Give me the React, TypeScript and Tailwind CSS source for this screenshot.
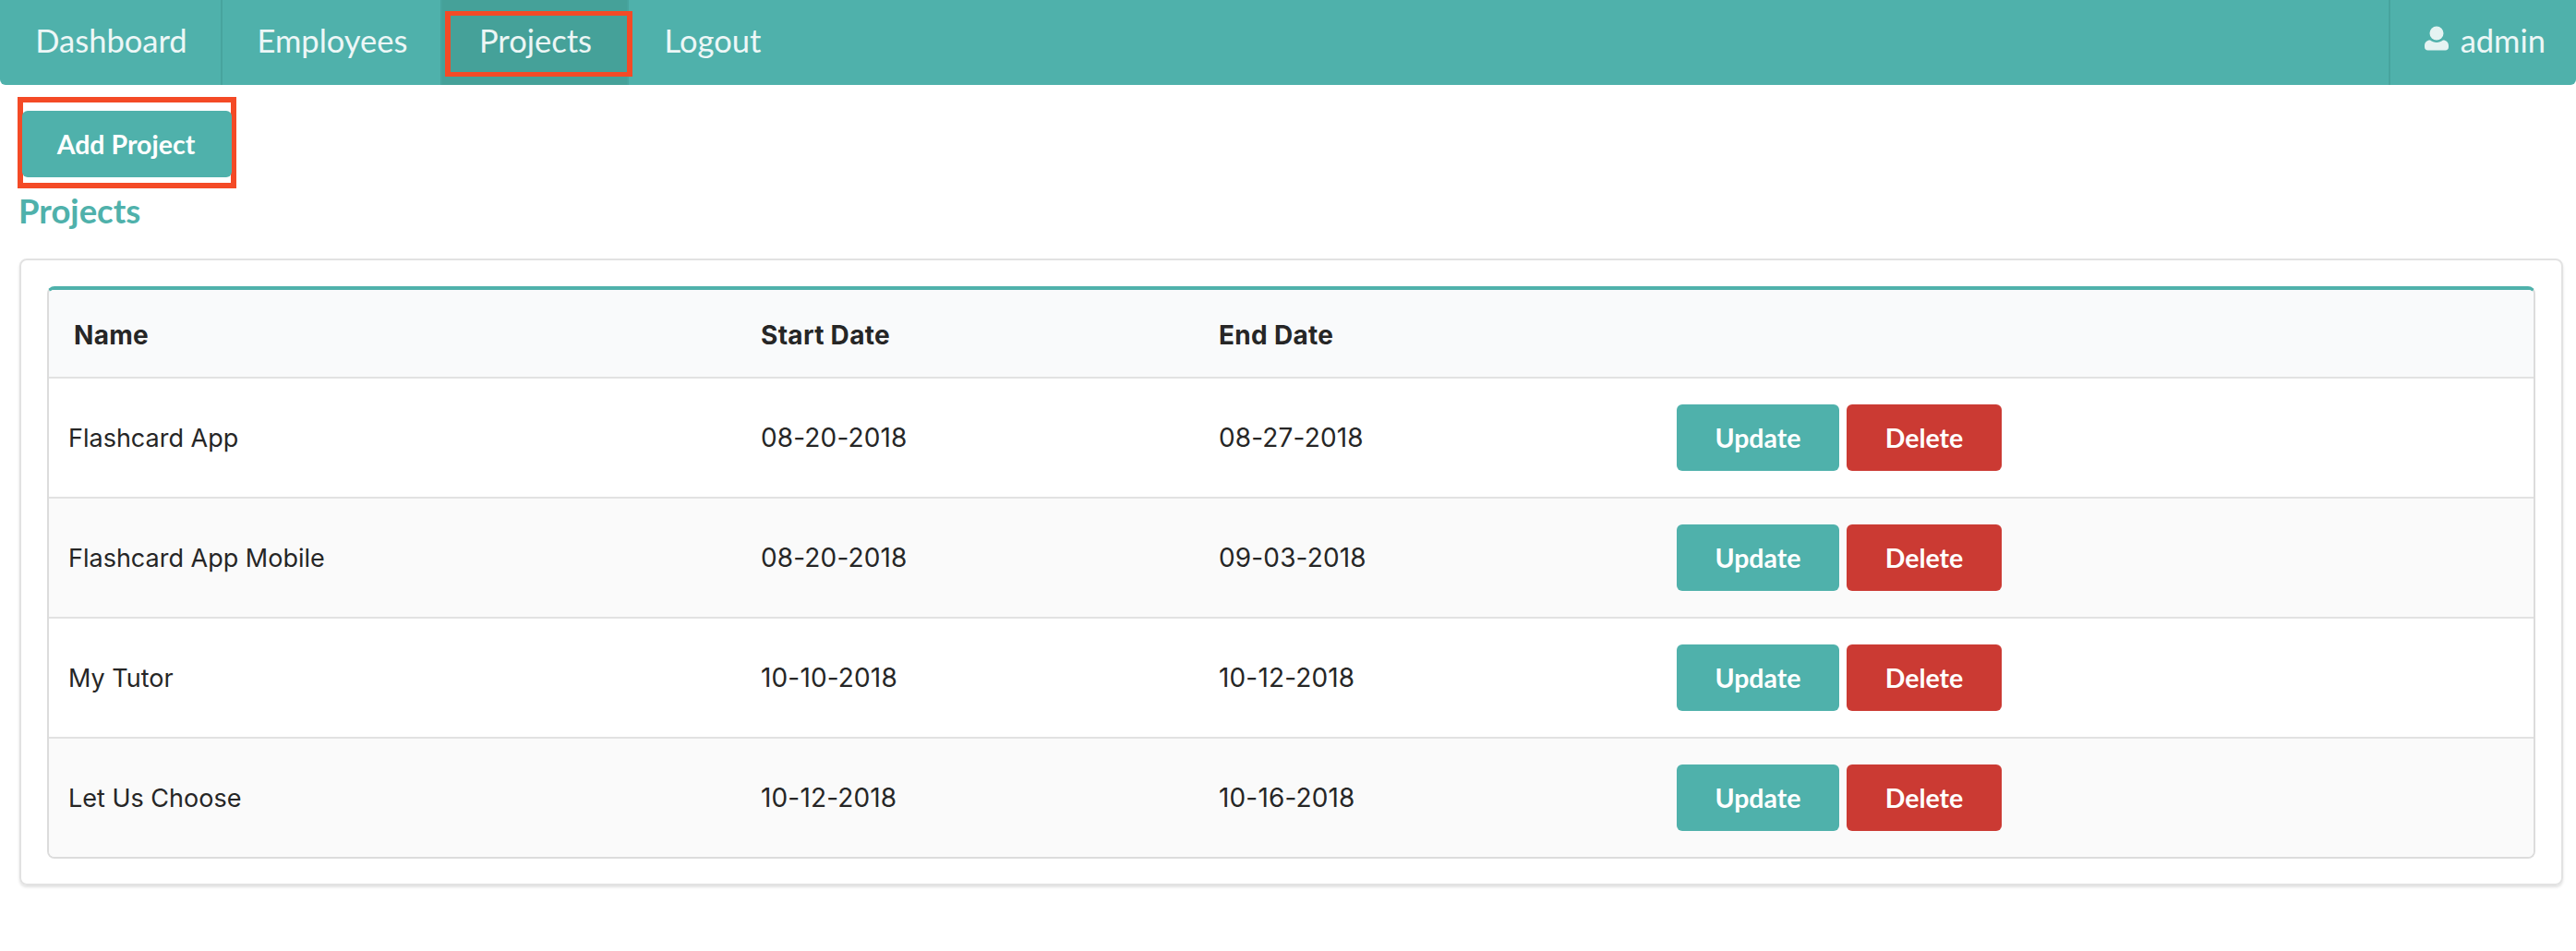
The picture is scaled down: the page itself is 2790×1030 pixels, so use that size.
const NAV = [
  { label: "Dashboard", width: "w-[241px]" },
  { label: "Employees", width: "w-[238px]" },
  { label: "Projects", width: "w-[202px]" },
  { label: "Logout", width: "w-[180px]" },
];

const PROJECTS = [
  { name: "Flashcard App", start: "08-20-2018", end: "08-27-2018" },
  { name: "Flashcard App Mobile", start: "08-20-2018", end: "09-03-2018" },
  { name: "My Tutor", start: "10-10-2018", end: "10-12-2018" },
  { name: "Let Us Choose", start: "10-12-2018", end: "10-16-2018" },
];

function UserIcon() {
  return (
    <svg width="26" height="27" viewBox="0 0 26 27" fill="currentColor" aria-hidden="true">
      <circle cx="13" cy="8" r="7.5" />
      <path d="M6 15.5c2 1.6 4.4 2.4 7 2.4s5-.8 7-2.4c3.500 0 6 2.500 6 6v1.500c0 2-1.500 3.500-3.500 3.500h-19C1.500 26.500 0 25 0 23v-1.500c0-3.500 2.500-6 6-6z" />
    </svg>
  );
}

export default function App() {
  return (
    <div className="min-h-[1030px] bg-white font-['Lato','Noto_Sans',sans-serif]">
      <nav className="flex h-[92px] rounded-b-[6px] bg-[#4fb1ab] text-[34.5px] text-white/90">
        {NAV.map((item) => (
          <a
            key={item.label}
            className={`relative flex items-center justify-center border-[#47a49e] pb-[4px] pl-[2px] ${item.width} ${
              item.label === "Projects" ? "bg-[#45a199]" : ""
            } ${item.label === "Logout" ? "" : "border-r-2"}`}
          >
            {item.label}
            {item.label === "Projects" && (
              <span className="absolute left-[3px] top-[12px] h-[71px] w-[203px] border-x-[6px] border-y-[5px] border-[#f44a26]" />
            )}
          </a>
        ))}
        <div className="ml-auto flex items-center gap-[13px] border-l-2 border-[#47a49e] pb-[4px] pl-[37px] pr-[33px]">
          <span className="-mt-[5px] text-white/85">
            <UserIcon />
          </span>
          <span>admin</span>
        </div>
      </nav>

      <div className="ml-[19px] mt-[13px] h-[99px] w-[237px] border-[6px] border-[#f44a26] pt-[9px]">
        <button className="-ml-px h-[72px] w-[227px] rounded-[6px] bg-[#4fb1ab] pr-[2px] text-[28.5px] font-bold text-white">
          Add Project
        </button>
      </div>

      <h1 className="ml-[20px] mt-[4px] text-[36.5px] font-bold leading-[40px] text-[#4fb1ab]">Projects</h1>

      <div className="ml-[21px] mr-[14px] mt-[32px] rounded-[8px] border-2 border-[#e2e2e2] px-[28px] pb-[27px] pt-[28px] shadow-[0_2px_3px_rgba(0,0,0,0.12)]">
        <table className="w-full table-fixed border-separate border-spacing-0 overflow-hidden rounded-[8px] border-x-2 border-b-2 border-t-4 border-x-[#dcdcdc] border-b-[#dcdcdc] border-t-[#4fb1ab] font-['Inter',sans-serif] text-[28px] text-[#262626]">
          <colgroup>
            <col className="w-[744px]" />
            <col className="w-[496px]" />
            <col className="w-[496px]" />
            <col />
          </colgroup>
          <thead>
            <tr className="h-[96px] bg-[#f9fafb] tracking-[0.3px]">
              <th className="border-b-2 border-[#e2e2e2] pl-[27px] pt-[3px] text-left font-bold">Name</th>
              <th className="border-b-2 border-[#e2e2e2] pl-[27px] pt-[3px] text-left font-bold">Start Date</th>
              <th className="border-b-2 border-[#e2e2e2] pl-[27px] pt-[3px] text-left font-bold">End Date</th>
              <th className="border-b-2 border-[#e2e2e2]" />
            </tr>
          </thead>
          <tbody>
            {PROJECTS.map((p, i) => (
              <tr
                key={p.name}
                className={`${i < 3 ? "h-[130px]" : "h-[128px]"} ${i % 2 === 1 ? "bg-[#fafafa]" : "bg-white"}`}
              >
                <td className={`pl-[21px] pt-[2px] text-[27px] ${i < 3 ? "border-b-2 border-[#e2e2e2]" : ""}`}>{p.name}</td>
                <td className={`pl-[27px] tracking-[0.15px] ${i < 3 ? "border-b-2 border-[#e2e2e2]" : ""}`}>{p.start}</td>
                <td className={`pl-[27px] tracking-[0.15px] ${i < 3 ? "border-b-2 border-[#e2e2e2]" : ""}`}>{p.end}</td>
                <td className={`pl-[27px] ${i < 3 ? "border-b-2 border-[#e2e2e2]" : ""}`}>
                  <div className="flex gap-2 font-['Lato',sans-serif] text-[28.5px] font-bold text-white">
                    <button className="h-[72px] w-[176px] rounded-[6px] bg-[#4fb1ab]">Update</button>
                    <button className="h-[72px] w-[168px] rounded-[6px] bg-[#cb3a33]">Delete</button>
                  </div>
                </td>
              </tr>
            ))}
          </tbody>
        </table>
      </div>
    </div>
  );
}
